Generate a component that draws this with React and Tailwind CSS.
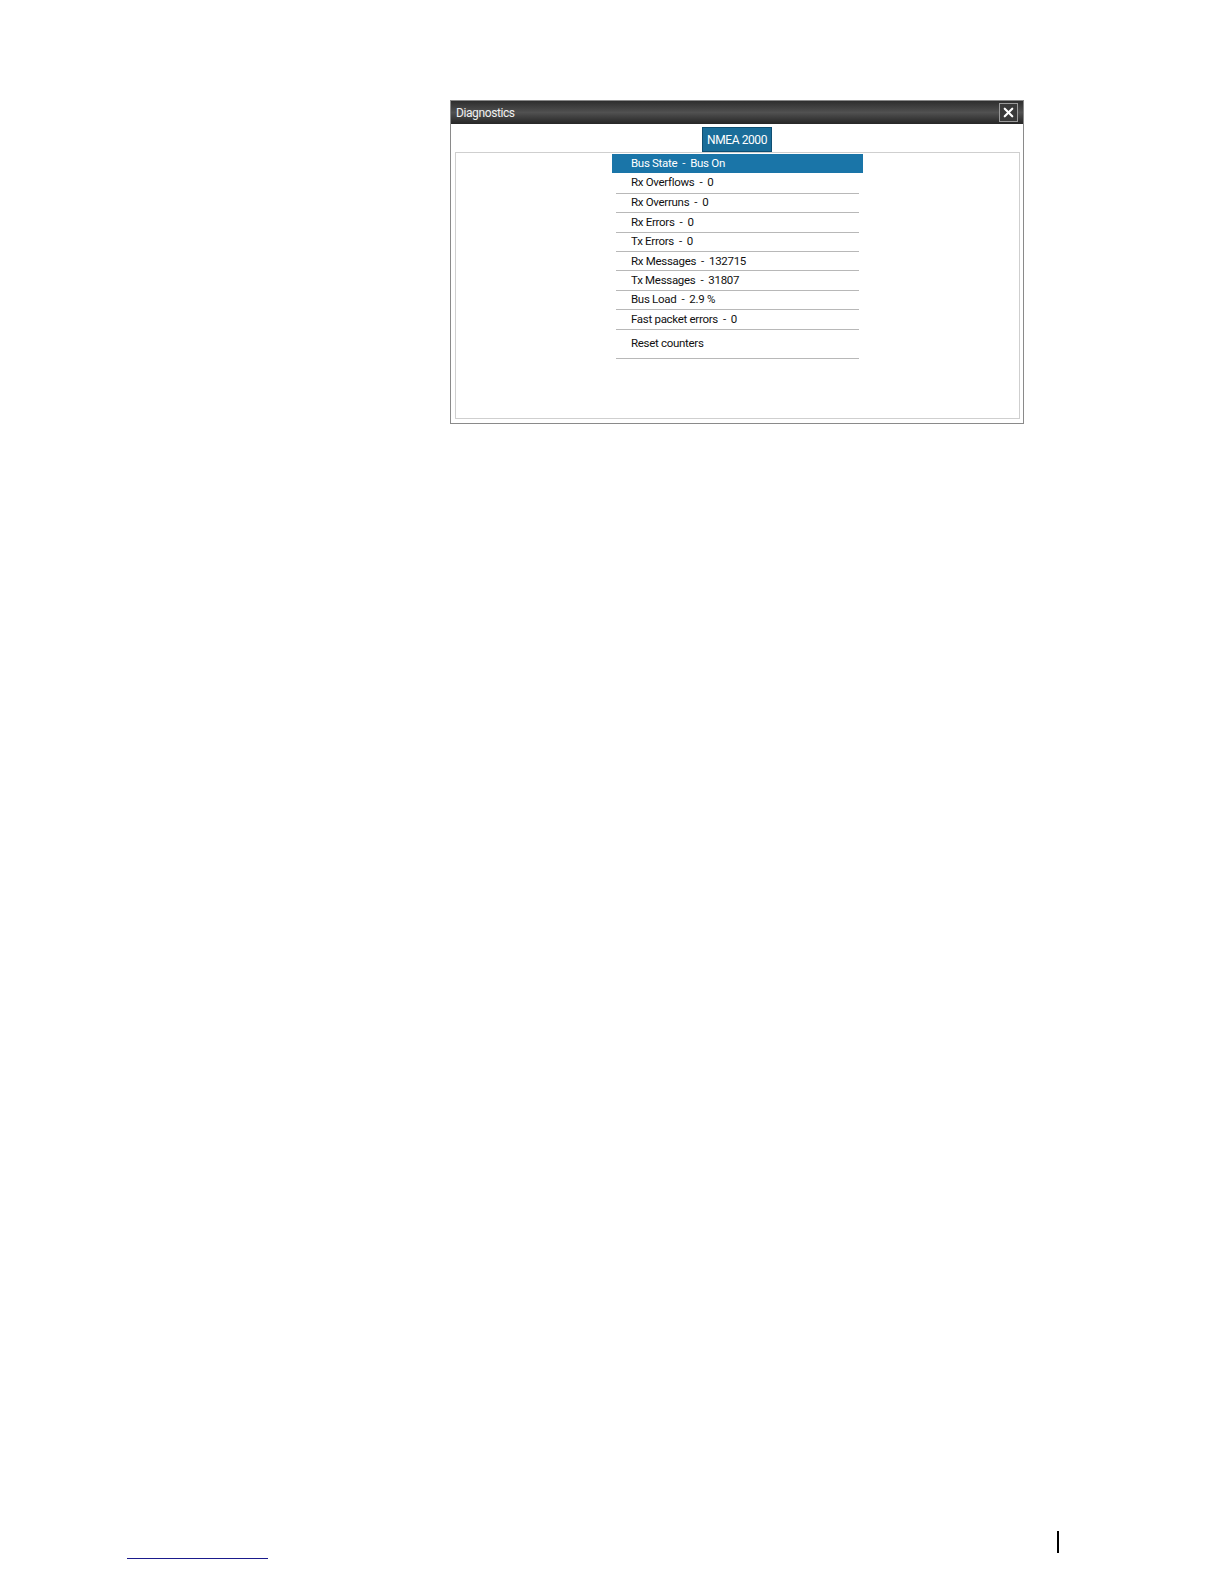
import { X } from 'lucide-react'

const rows = [
    { label: 'Bus State', value: 'Bus On' },
    { label: 'Rx Overflows', value: '0' },
    { label: 'Rx Overruns', value: '0' },
    { label: 'Rx Errors', value: '0' },
    { label: 'Tx Errors', value: '0' },
    { label: 'Rx Messages', value: '132715' },
    { label: 'Tx Messages', value: '31807' },
    { label: 'Bus Load', value: '2.9 %' },
    { label: 'Fast packet errors', value: '0' },
]

export default function App() {
    return (
        <div className="h-[1584px] w-[1224px] bg-white flex flex-col" style={{ fontFamily: 'Roboto, "Open Sans", sans-serif' }}>
            {/* Diagnostics window */}
            <div className="ml-[450px] mt-[100px] w-[574px] h-[324px] border border-[#8a8a8a] bg-white flex flex-col">
                {/* Title bar */}
                <div className="h-[23px] flex items-center justify-between pl-[5px] pr-[5px] bg-gradient-to-b from-[#2e2e2e] via-[#515151] to-[#262626]">
                    <span className="text-[12px] tracking-[-0.4px] text-[#f0f0f0]">Diagnostics</span>
                    <div className="w-[19px] h-[19px] border border-[#9a9a9a] bg-[#3a3a3a] flex items-center justify-center">
                        <X size={15} strokeWidth={3.5} className="text-white" />
                    </div>
                </div>

                {/* Tab */}
                <div className="flex justify-center pt-[3px]">
                    <div className="w-[70px] h-[25px] bg-[#1a6d99] border border-[#0f4f72] flex items-center justify-center">
                        <span className="text-[12px] tracking-[-0.4px] text-white">NMEA 2000</span>
                    </div>
                </div>

                {/* Panel */}
                <div className="flex-1 ml-[4px] mr-[3px] mb-[4px] border border-[#cfcfcf] flex justify-center">
                    <div className="w-[251px] pt-[1px] flex flex-col">
                        {rows.map((row, i) =>
                            i === 0 ? (
                                <div key={row.label} className="h-[19.4px] flex items-center pl-[19px] text-[11.5px] tracking-[-0.3px] bg-[#1a75a8] text-white">
                                    {row.label}<span className="mx-[5px]">-</span>{row.value}
                                </div>
                            ) : (
                                <div
                                    key={row.label}
                                    className={`h-[19.4px] flex items-center mx-[4px] pl-[15px] text-[11.5px] tracking-[-0.3px] text-[#111] ${i === 1 ? '' : 'border-t border-[#b8b8b8]'}`}
                                >
                                    {row.label}<span className="mx-[5px]">-</span>{row.value}
                                </div>
                            )
                        )}
                        <div className="h-[30px] mx-[4px] pl-[15px] flex items-center border-t border-b border-[#b8b8b8] text-[11.5px] tracking-[-0.3px] text-[#111]">
                            Reset counters
                        </div>
                    </div>
                </div>
            </div>

            {/* Page footer marks */}
            <div className="mt-auto mb-[25px] flex flex-col">
                <div className="ml-[1057px] w-[2px] h-[22px] bg-black" />
                <div className="ml-[127px] mt-[5px] w-[141px] h-px bg-[#1a1a8c]" />
            </div>
        </div>
    )
}
